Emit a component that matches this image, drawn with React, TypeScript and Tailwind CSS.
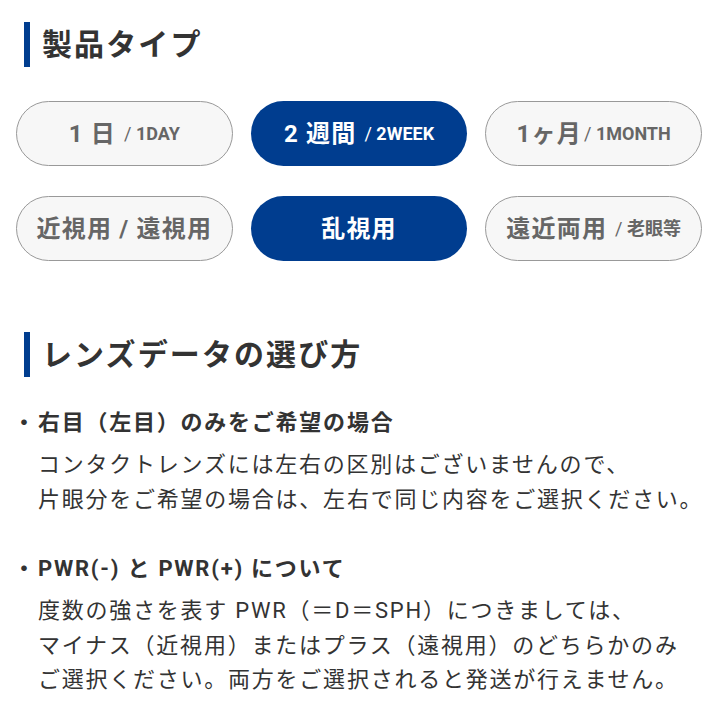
const font = "font-['Roboto','Noto_Sans_CJK_JP',sans-serif]"

type Option = {
  main: string
  sub?: string
  gap?: boolean
  active?: boolean
}

const typeOptions: Option[] = [
  { main: "1 日", sub: "1DAY", gap: true },
  { main: "2 週間", sub: "2WEEK", gap: true, active: true },
  { main: "1ヶ月", sub: "1MONTH" },
  { main: "近視用 / 遠視用" },
  { main: "乱視用", active: true },
  { main: "遠近両用", sub: "老眼等", gap: true },
]

function Heading({ children }: { children: React.ReactNode }) {
  return (
    <div className="ml-2 flex h-[45px] items-center border-l-[6px] border-[#003d8f] pl-3">
      <h2 className="text-[30px] font-bold leading-none tracking-[0.07em] text-[#333]">{children}</h2>
    </div>
  )
}

function OptionButton({ main, sub, gap, active }: Option) {
  return (
    <button
      className={
        active
          ? "flex h-[65px] items-center justify-center rounded-full bg-[#003d8f] font-bold text-white"
          : "flex h-[65px] items-center justify-center rounded-full border border-[#999] bg-[#f7f7f7] font-bold text-[#666]"
      }
    >
      <span className="text-[24px] tracking-[0.05em] whitespace-pre">{main}</span>
      {sub && (
        <span className={gap ? "ml-2 text-[18px] whitespace-pre" : "ml-0.5 text-[18px] whitespace-pre"}>
          <span className="font-normal">/ </span>
          {sub}
        </span>
      )}
    </button>
  )
}

function Note({ title, lines }: { title: string; lines: string[] }) {
  return (
    <div>
      <div className="flex text-[22px] font-bold leading-[34px] tracking-[0.08em] text-[#333]">
        <span className="-ml-[3px] w-[25px] shrink-0">・</span>
        <span>{title}</span>
      </div>
      <div className="mt-2 pl-[22px] text-[22px] leading-[34.5px] tracking-[0.08em] text-[#333]">
        {lines.map((line) => (
          <p key={line} className="whitespace-nowrap">
            {line}
          </p>
        ))}
      </div>
    </div>
  )
}

export default function App() {
  return (
    <div className={`${font} h-[720px] w-[720px] overflow-hidden bg-white px-4 pt-[22px]`}>
      <Heading>製品タイプ</Heading>

      <div className="mt-[34px] grid w-[686px] grid-cols-3 gap-x-[18px] gap-y-[30px]">
        {typeOptions.map((opt) => (
          <OptionButton key={opt.main} {...opt} />
        ))}
      </div>

      <div className="mt-[71px]">
        <Heading>レンズデータの選び方</Heading>
      </div>

      <div className="mt-[29px] flex flex-col gap-[35px]">
        <Note
          title="右目（左目）のみをご希望の場合"
          lines={[
            "コンタクトレンズには左右の区別はございませんので、",
            "片眼分をご希望の場合は、左右で同じ内容をご選択ください。",
          ]}
        />
        <Note
          title="PWR(-) と PWR(+) について"
          lines={[
            "度数の強さを表す PWR（＝D＝SPH）につきましては、",
            "マイナス（近視用）またはプラス（遠視用）のどちらかのみ",
            "ご選択ください。両方をご選択されると発送が行えません。",
          ]}
        />
      </div>
    </div>
  )
}
